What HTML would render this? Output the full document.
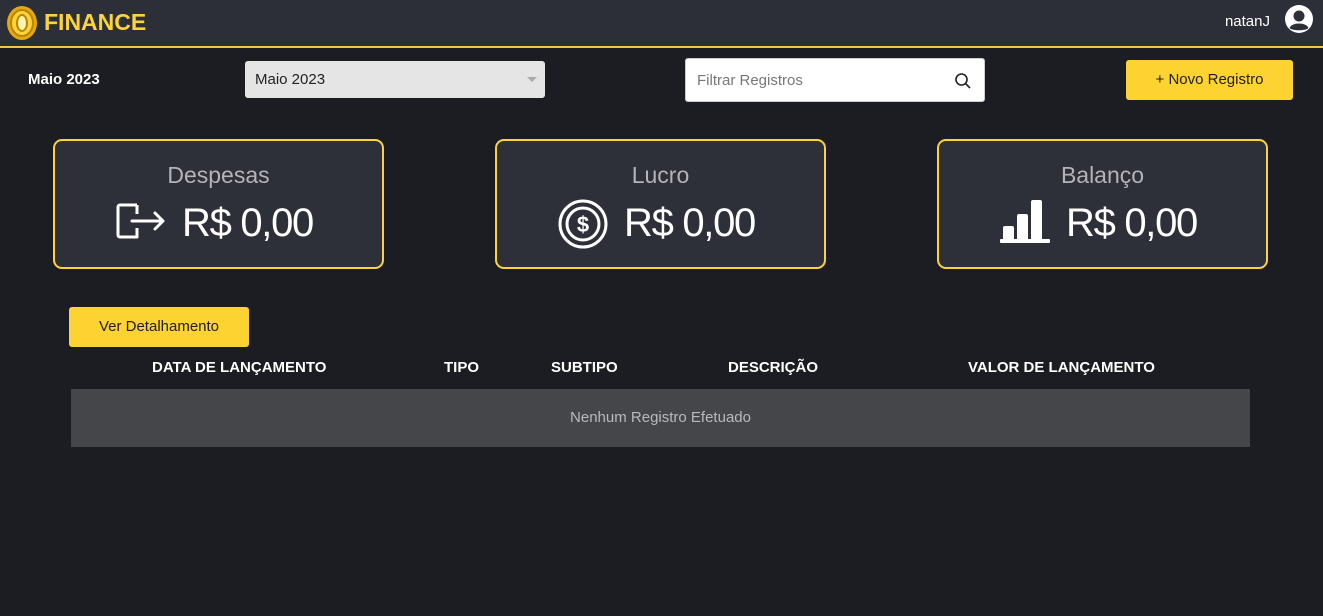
<!DOCTYPE html>
<html><head><meta charset="utf-8"><style>
*{box-sizing:border-box;margin:0;padding:0}
body{width:1323px;height:616px;overflow:hidden;background:#1c1d22;font-family:"Liberation Sans",Arial,sans-serif;color:#fff;position:relative}
.hdr{position:absolute;left:0;top:0;width:1323px;height:48px;background:#2d2f38;border-bottom:2px solid #f5c935}
.logo{position:absolute;left:44px;top:9px;font-size:23px;font-weight:bold;color:#fcd33a}
.user{position:absolute;right:53px;top:13px;font-size:15px}
.abs{position:absolute}
.card{position:absolute;top:139px;width:331px;height:130px;background:#2e3039;border:2px solid #fcd33a;border-radius:9px}
.card .t{position:absolute;top:21px;width:100%;text-align:center;font-size:23px;color:#b3b3b8}
.card .v{position:absolute;top:60px;font-size:40px;letter-spacing:-1.3px;color:#fff}
.btn{position:absolute;background:#fdd331;color:#1c1d22;border-radius:3px;font-size:15px;text-align:center}
.th{position:absolute;top:359px;font-size:15px;font-weight:bold}
</style></head><body>
<div class="hdr"></div>
<svg class="abs" style="left:6px;top:5px" width="32" height="36" viewBox="0 0 32 36"><ellipse cx="16" cy="18" rx="15" ry="17" fill="#e5a90e"/><ellipse cx="16" cy="18" rx="11" ry="13" fill="#fcd33a" stroke="#b88508" stroke-width="2"/><ellipse cx="16" cy="18" rx="5" ry="8" fill="#fff3b0" stroke="#b88508" stroke-width="2"/></svg>
<div class="logo">FINANCE</div>
<div class="user">natanJ</div>
<svg class="abs" style="left:1285px;top:5px" width="28" height="28" viewBox="0 0 28 28"><circle cx="14" cy="14" r="14" fill="#fff"/><circle cx="14" cy="11" r="5.5" fill="#2d2f38"/><path d="M4.5 23 C7 17,21 17,23.5 23 C21 26,7 26,4.5 23Z" fill="#2d2f38"/></svg>
<div class="abs" style="left:28px;top:71px;font-size:15px;font-weight:bold">Maio 2023</div>
<div class="abs" style="left:245px;top:61px;width:300px;height:37px;background:#e5e5e5;border-radius:3px;color:#222;font-size:15px;padding:10px 10px"><span>Maio 2023</span><span style="position:absolute;right:8px;top:16px;border:5px solid transparent;border-top:5px solid #aaa"></span></div>
<div class="abs" style="left:685px;top:58px;width:300px;height:44px;background:#fff;border:1px solid #ccc;border-radius:3px;color:#777;font-size:15px;padding:13px 11px">Filtrar Registros
<svg class="abs" style="left:268px;top:13px" width="18" height="18" viewBox="0 0 18 18"><circle cx="7.5" cy="7.5" r="5.5" fill="none" stroke="#222" stroke-width="1.6"/><line x1="11.5" y1="11.5" x2="16" y2="16" stroke="#222" stroke-width="1.6"/></svg></div>
<div class="btn" style="left:1126px;top:60px;width:167px;height:40px;line-height:40px">+ Novo Registro</div>

<div class="card" style="left:53px"><div class="t">Despesas</div>
<svg class="abs" style="left:60px;top:60px" width="52" height="40" viewBox="0 0 52 40"><path d="M22 4H5a2 2 0 0 0-2 2v28a2 2 0 0 0 2 2h17v-9M22 13V4" fill="none" stroke="#fff" stroke-width="3" stroke-linejoin="round"/><path d="M17 20h30M40 12l8 8-8 8" fill="none" stroke="#fff" stroke-width="3" stroke-linecap="round" stroke-linejoin="round"/></svg>
<div class="v" style="left:127px">R$ 0,00</div></div>
<div class="card" style="left:495px"><div class="t">Lucro</div>
<svg class="abs" style="left:60px;top:57px" width="52" height="52" viewBox="0 0 52 52"><circle cx="26" cy="26" r="23" fill="none" stroke="#fff" stroke-width="3"/><circle cx="26" cy="26" r="16" fill="none" stroke="#fff" stroke-width="3"/><text x="26" y="34" text-anchor="middle" font-size="22" font-weight="bold" fill="#fff" font-family="Liberation Sans">$</text></svg>
<div class="v" style="left:127px">R$ 0,00</div></div>
<div class="card" style="left:937px"><div class="t">Balanço</div>
<svg class="abs" style="left:60px;top:57px" width="52" height="46" viewBox="0 0 52 46"><rect x="4" y="28" width="11" height="15" rx="2" fill="#fff"/><rect x="18" y="16" width="11" height="27" rx="2" fill="#fff"/><rect x="32" y="2" width="11" height="41" rx="2" fill="#fff"/><rect x="1" y="41" width="50" height="4" rx="1" fill="#fff"/></svg>
<div class="v" style="left:127px">R$ 0,00</div></div>

<div class="btn" style="left:69px;top:307px;width:180px;height:40px;line-height:40px">Ver Detalhamento</div>
<div class="th" style="left:152px">DATA DE LANÇAMENTO</div>
<div class="th" style="left:444px">TIPO</div>
<div class="th" style="left:551px">SUBTIPO</div>
<div class="th" style="left:728px">DESCRIÇÃO</div>
<div class="th" style="left:968px">VALOR DE LANÇAMENTO</div>
<div class="abs" style="left:71px;top:389px;width:1179px;height:58px;background:#45464a;color:#b9b9bc;font-size:15px;text-align:center;line-height:58px">Nenhum Registro Efetuado</div>
</body></html>
